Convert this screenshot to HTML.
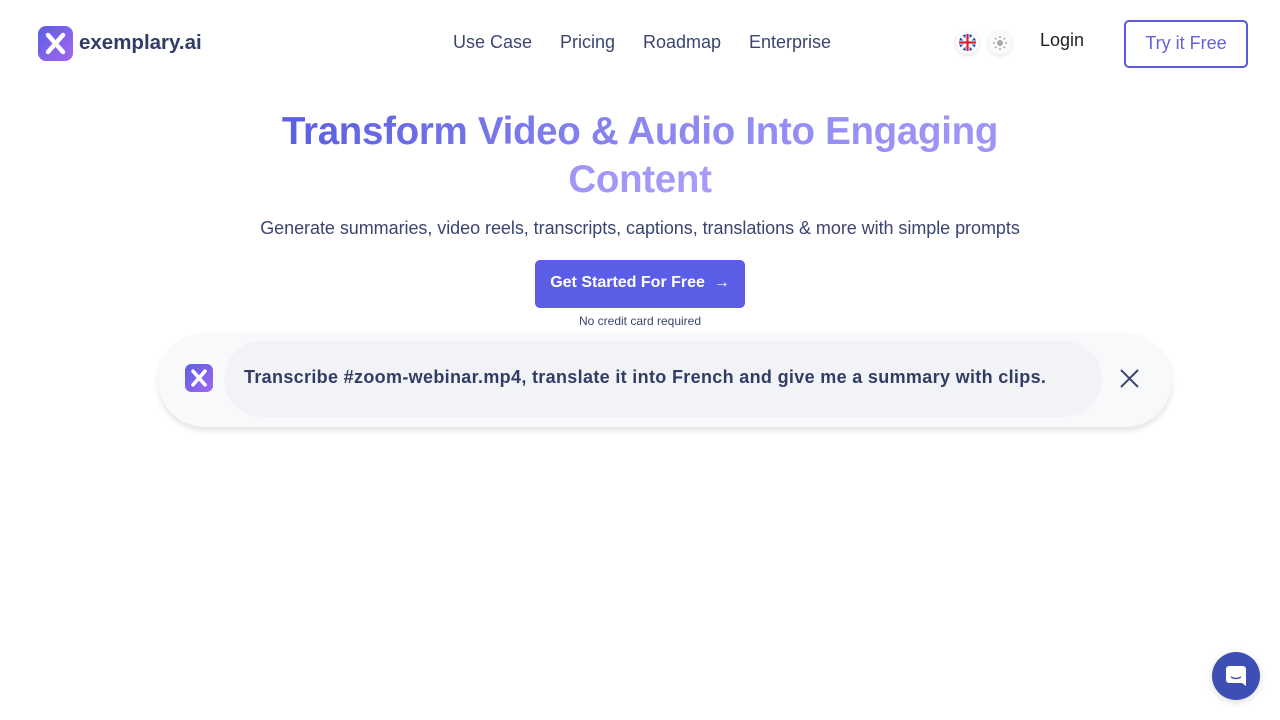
<!DOCTYPE html>
<html><head><meta charset="utf-8"><style>
*{margin:0;padding:0;box-sizing:border-box}
body{width:1280px;height:720px;background:#fff;font-family:"Liberation Sans",sans-serif;position:relative;overflow:hidden;color:#334068}
.abs{position:absolute}
.nav a{position:absolute;top:32px;font-size:18px;color:#3b4570;text-decoration:none}
h1{position:absolute;top:108px;left:0;width:1280px;text-align:center;font-size:38.5px;line-height:48px;font-weight:bold;letter-spacing:-0.3px}
h1 span{background:linear-gradient(90deg,#5a5fe0 0%,#8e88f2 45%,#a69cf8 100%);-webkit-background-clip:text;background-clip:text;color:transparent}
</style></head><body>
<svg class="abs" style="left:38px;top:26px" width="35" height="35" viewBox="0 0 35 35"><defs><linearGradient id="g" x1="0" y1="0" x2="1" y2="1"><stop offset="0" stop-color="#5b5fe6"/><stop offset="1" stop-color="#a465ee"/></linearGradient></defs><rect width="35" height="35" rx="8" fill="url(#g)"/><path d="M10 9 L25 26 M25 9 L10 26" stroke="#fff" stroke-width="4.5" stroke-linecap="round"/></svg>
<div class="abs" style="left:79px;top:31px;font-size:20.5px;font-weight:bold;color:#323d66">exemplary.ai</div>
<div class="nav"><a style="left:453px">Use Case</a><a style="left:560px">Pricing</a><a style="left:643px">Roadmap</a><a style="left:749px">Enterprise</a></div>
<div class="abs" style="left:956px;top:31px;width:23px;height:23px;border-radius:50%;box-shadow:0 1px 4px rgba(0,0,0,.15);background:#fff;padding:3px"><svg width="17" height="17" viewBox="0 0 17 17"><clipPath id="c"><circle cx="8.5" cy="8.5" r="8.5"/></clipPath><g clip-path="url(#c)"><rect width="17" height="17" fill="#2b4aa8"/><path d="M0 0L17 17M17 0L0 17" stroke="#fff" stroke-width="3"/><path d="M8.5 0V17M0 8.5H17" stroke="#fff" stroke-width="4"/><path d="M8.5 0V17M0 8.5H17" stroke="#d52135" stroke-width="2.2"/></g></svg></div>
<div class="abs" style="left:988px;top:31px;width:24px;height:24px;border-radius:50%;box-shadow:0 1px 4px rgba(0,0,0,.12);background:#fafafa"><svg width="24" height="24" viewBox="0 0 24 24"><circle cx="12" cy="12" r="3" fill="#aaa"/><path d="M12 5v2M12 17v2M5 12h2M17 12h2M7 7l1.4 1.4M15.6 15.6L17 17M7 17l1.4-1.4M15.6 8.4L17 7" stroke="#aaa" stroke-width="1.5"/></svg></div>
<div class="abs" style="left:1040px;top:30px;font-size:18px;color:#1f1f1f">Login</div>
<div class="abs" style="left:1124px;top:20px;width:124px;height:48px;border:2px solid #5b5ad6;border-radius:5px;text-align:center;line-height:43px;font-size:18px;color:#6461d8">Try it Free</div>
<h1><span>Transform Video &amp; Audio Into Engaging<br>Content</span></h1>
<div class="abs" style="left:0;width:1280px;top:218px;text-align:center;font-size:18px;color:#3b4570;letter-spacing:-0.05px">Generate summaries, video reels, transcripts, captions, translations &amp; more with simple prompts</div>
<div class="abs" style="left:535px;top:260px;width:210px;height:48px;background:#5b5de6;border-radius:5px;color:#fff;font-size:16px;font-weight:bold;line-height:46px;text-align:center">Get Started For Free &nbsp;→</div>
<div class="abs" style="left:0;width:1280px;top:314px;text-align:center;font-size:12px;color:#3b4570">No credit card required</div>
<div class="abs" style="left:158px;top:333px;width:1014px;height:94px;border-radius:47px;background:#f8f9fb;box-shadow:0 4px 6px rgba(0,0,0,.1)"></div>
<div class="abs" style="left:224px;top:341px;width:878px;height:76px;border-radius:38px;background:#f1f3f6"></div>
<svg class="abs" style="left:185px;top:364px" width="28" height="28" viewBox="0 0 35 35"><rect width="35" height="35" rx="8" fill="url(#g)"/><path d="M10 9 L25 26 M25 9 L10 26" stroke="#fff" stroke-width="4.5" stroke-linecap="round"/></svg>
<div class="abs" style="left:244px;top:367px;font-size:18px;font-weight:bold;color:#323d66;letter-spacing:0.33px">Transcribe #zoom-webinar.mp4, translate it into French and give me a summary with clips.</div>
<svg class="abs" style="left:1120px;top:369px" width="19" height="19"><path d="M1 1L18 18M18 1L1 18" stroke="#3b4570" stroke-width="2"/></svg>
<div class="abs" style="left:1212px;top:652px;width:48px;height:48px;border-radius:50%;background:#3d4fb5;box-shadow:0 2px 8px rgba(0,0,0,.15)"><svg style="margin:13px" width="22" height="22" viewBox="0 0 22 22"><path d="M4 1h14a3 3 0 0 1 3 3v17l-4-3H4a3 3 0 0 1-3-3V4a3 3 0 0 1 3-3z" fill="#fff"/><path d="M6 12q5 3 10 0" stroke="#3d4fb5" stroke-width="1.5" fill="none"/></svg></div>
</body></html>
